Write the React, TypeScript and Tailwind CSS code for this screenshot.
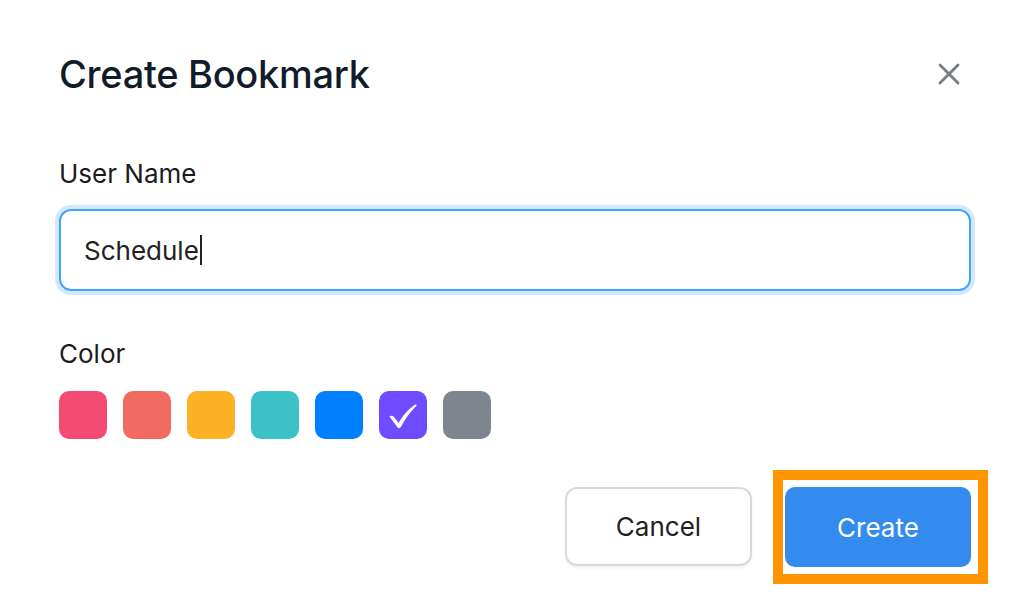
import { X } from 'lucide-react';

const swatches = ['#f44b73', '#f26b63', '#fdb226', '#3dc1c9', '#0080ff', '#6f4cff', '#7f858e'];

export default function App() {
  const selected = 5;

  return (
    <div className="min-h-[610px] w-[1030px] bg-white px-[59px] pt-[52px] font-['Inter','Noto_Sans',sans-serif]">
      <div className="flex items-center justify-between">
        <h1 className="text-[38px] leading-[44px] font-medium tracking-[-0.3px] text-[#111c2b]">Create Bookmark</h1>
        <button className="mr-[4px] flex h-9 w-9 items-center justify-center text-[#767d87]">
          <X className="h-[36px] w-[36px]" strokeWidth={1.9} />
        </button>
      </div>

      <label className="mt-[62px] block text-[26px] leading-[32px] text-[#1b1b1b]">User Name</label>
      <div className="mt-[19px] flex h-[82px] items-center rounded-[12px] border-2 border-[#3ea4ff] px-[23px] shadow-[0_0_0_4px_#d3e8fd]">
        <span className="text-[26px] text-[#222]">Schedule</span>
        <span className="ml-[1px] h-[30px] w-[2px] bg-[#222]" />
      </div>

      <label className="mt-[47px] block text-[26px] leading-[32px] text-[#1b1b1b]">Color</label>
      <div className="mt-[21px] flex gap-4">
        {swatches.map((c, i) => (
          <div key={c} className="flex h-12 w-12 items-center justify-center rounded-[10px]" style={{ backgroundColor: c }}>
            {i === selected && (
              <svg viewBox="0 0 48 48" className="h-12 w-12">
                <path
                  d="M10.5 25.5 C12 24.2 13.6 24.6 15 26 L19.6 32 C23.6 25 29.6 17.8 36.4 13.6 C37.4 13 38.2 14 37.4 14.8 C31 21 25.6 28.6 21.8 36 C21 37.4 19.4 37.6 18.4 36.2 Z"
                  fill="white"
                />
              </svg>
            )}
          </div>
        ))}
      </div>

      <div className="mt-[48px] flex justify-end gap-[33px]">
        <button className="h-[79px] w-[187px] rounded-[12px] border-2 border-[#dadada] bg-white text-[26px] text-[#222] shadow-[0_2px_3px_rgba(0,0,0,0.06)]">
          Cancel
        </button>
        <div className="relative">
          <button className="h-[80px] w-[186px] rounded-[10px] bg-[#338bef] text-[26px] text-white">Create</button>
          <div className="pointer-events-none absolute -left-[12px] -top-[17px] h-[114px] w-[215px] border-[10px] border-[#ff9500]" />
        </div>
      </div>
    </div>
  );
}
